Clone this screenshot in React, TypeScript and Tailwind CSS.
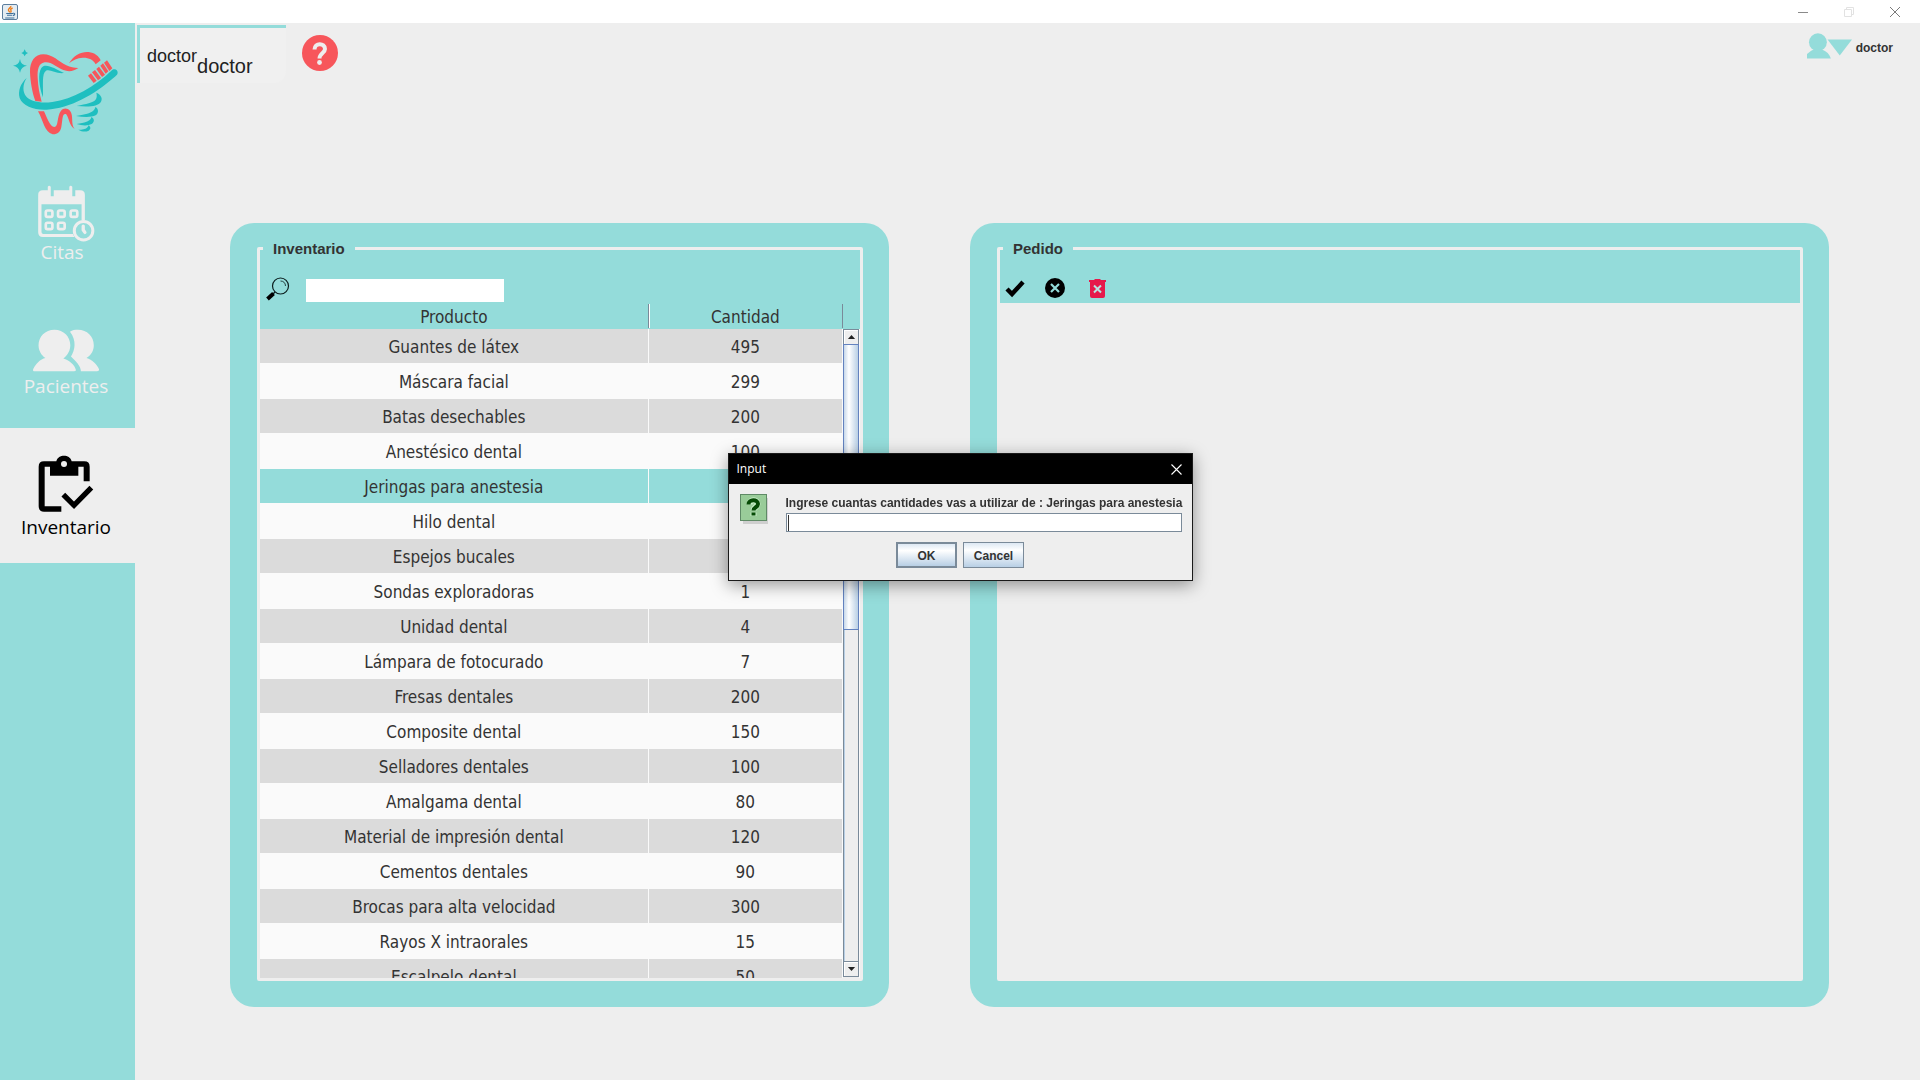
import React from "react";

const products: [string, string][] = [
  ["Guantes de látex", "495"],
  ["Máscara facial", "299"],
  ["Batas desechables", "200"],
  ["Anestésico dental", "100"],
  ["Jeringas para anestesia", "50"],
  ["Hilo dental", "100"],
  ["Espejos bucales", "50"],
  ["Sondas exploradoras", "1"],
  ["Unidad dental", "4"],
  ["Lámpara de fotocurado", "7"],
  ["Fresas dentales", "200"],
  ["Composite dental", "150"],
  ["Selladores dentales", "100"],
  ["Amalgama dental", "80"],
  ["Material de impresión dental", "120"],
  ["Cementos dentales", "90"],
  ["Brocas para alta velocidad", "300"],
  ["Rayos X intraorales", "15"],
  ["Escalpelo dental", "50"],
];

const SELECTED = 4;

function JavaIcon() {
  return (
    <svg viewBox="0 0 16 16" className="h-4 w-4">
      <rect x="0.5" y="0.5" width="15" height="15" rx="1.5" fill="#e4ecf2" stroke="#5b7d9c" />
      <path d="M8.8 2C9.4 3.6 6 4.6 6.4 6.2C6.6 7 7.8 7.6 7.8 8.6M10.6 4C8.8 4.8 8.2 5.6 9 6.6C9.4 7.4 8.9 8 8.5 8.6" fill="none" stroke="#ee7f1b" strokeWidth="1.4" />
      <path d="M4.2 9.5H11M5 11.3H10.3M3.2 14H12.4M11 9.3C13.4 8.8 13.2 11.2 11 11.6" fill="none" stroke="#3f709a" strokeWidth="1.1" />
    </svg>
  );
}

function Logo() {
  const teal = "#1fbfc0";
  const red = "#f7565b";
  return (
    <svg viewBox="30 140 330 270" className="h-[90px] w-[110px]" role="img" aria-label="Clínica dental">
      <path fill={teal} d="M60 176Q62 194 81 196Q63 199 60 217Q57 199 39 196Q57 194 60 176Z" />
      <path fill={teal} d="M74 147Q76 156 84 158Q76 160 74 168Q72 160 64 158Q72 156 74 147Z" />
      <path fill={red} d="M106 302C97 278 91 244 90 215C89 183 105 162 130 162C158 162 176 184 199 195C211 201 222 203 235 203C222 213 205 215 190 209C170 201 153 183 134 186C115 189 112 209 113 232C114 260 119 281 125 304Z" />
      <path fill={teal} d="M129 291C117 258 113 220 124 203C136 187 163 204 192 218C168 221 150 205 138 211C125 219 130 255 129 291Z" />
      <path fill={red} d="M207 189C222 163 245 153 266 155C284 157 297 168 302 180L287 192C280 177 264 171 248 172C232 173 218 180 207 189Z" />
      <g fill={red}>
        <path d="M264 226L273 219L290 241L281 248Z" />
        <path d="M276 216L285 209L303 233L294 240Z" />
        <path d="M289 206L297 199L315 223L306 230Z" />
        <path d="M301 196L309 189L325 213L317 220Z" />
        <path d="M312 187L321 180L337 204L328 212Z" />
      </g>
      <path fill={teal} d="M80 233C67 253 68 275 78 288C91 304 123 310 157 305C218 296 286 258 334 211C342 203 354 207 353 218C352 224 347 228 340 233C283 283 211 324 140 328C104 330 68 317 59 293C53 272 62 249 80 233Z" />
      <path fill={red} d="M114 333L132 333C140 350 149 379 163 380C176 380 170 348 183 331C190 322 202 322 210 331C222 346 211 370 224 386C207 377 207 350 198 341C186 338 188 358 184 380C181 395 171 403 158 402C133 396 130 361 114 333Z" />
      <path fill={teal} d="M289 277C304 283 308 295 303 304C294 319 266 320 230 317C259 311 279 307 286 299C291 293 291 285 289 277Z" />
      <path fill={teal} d="M286 320C297 326 296 339 287 345C274 352 250 351 228 347C251 343 269 340 278 333C283 329 285 325 286 320Z" />
      <path fill={teal} d="M274 350C284 355 284 365 275 371C263 377 246 376 230 371C248 369 261 366 268 360C272 357 273 354 274 350Z" />
      <path fill={teal} d="M265 375C273 379 273 387 266 391C256 396 245 394 235 388C247 388 256 386 261 382C264 380 265 378 265 375Z" />
    </svg>
  );
}

function CalendarIcon() {
  return (
    <svg viewBox="112 104 174 172" className="h-[57px] w-[58px]">
      <path fill="#eeeeee" fillRule="evenodd" d="M129 120H144V109Q148 103 153 109V138H162V120H209V109Q213 103 218 109V138H227V120H242Q256 120 256 134V210H246V162H125V246Q125 252 131 252H220L224 261H129Q115 261 115 246V134Q115 120 129 120Z" />
      <g fill="none" stroke="#eeeeee" strokeWidth="8">
        <rect x="138" y="181" width="20" height="19" rx="5" />
        <rect x="175" y="181" width="20" height="19" rx="5" />
        <rect x="213" y="181" width="20" height="19" rx="5" />
        <rect x="138" y="218" width="20" height="19" rx="5" />
        <rect x="175" y="218" width="20" height="19" rx="5" />
      </g>
      <circle cx="252" cy="242" r="28" fill="#94dcda" stroke="#eeeeee" strokeWidth="9" />
      <path d="M251 228V240L256 247" fill="none" stroke="#eeeeee" strokeWidth="10" strokeLinecap="round" />
    </svg>
  );
}

function PeopleIcon() {
  return (
    <svg viewBox="96 532 204 130" className="h-[43px] w-[68px]">
      <g fill="#eeeeee">
        <path d="M163 534C191 534 211 555 211 581C211 597 203 611 190 621C207 625 225 641 228 656Q228 660 222 660H104Q96 660 99 653C107 638 120 623 136 620C123 611 115 597 115 581C115 555 135 534 163 534Z" />
        <path d="M210 540C217 535 225 534 234 534C262 534 282 554 282 581C282 597 275 610 260 620C277 625 292 640 298 654Q299 660 292 660H243C243 643 227 629 213 615C225 596 231 567 210 540Z" />
      </g>
    </svg>
  );
}

function ClipboardIcon() {
  return (
    <svg viewBox="113 103 168 174" className="h-[58px] w-14">
      <path fill="#000" d="M131 122H168C173 100 209 100 214 122H252Q268 122 268 138V182H250V138H234V165H149V138H133V257H183V273H131Q115 273 115 257V138Q115 122 131 122Z" />
      <circle cx="191" cy="130" r="9" fill="#eeeeee" />
      <path d="M189 222L221 254L273 201" fill="none" stroke="#000" strokeWidth="16" />
    </svg>
  );
}

function HelpIcon() {
  return (
    <svg viewBox="0 0 36 36" className="h-9 w-9">
      <circle cx="18" cy="18" r="18" fill="#f7565b" />
      <path d="M12.5 14.5C12.5 7.5 23 7.5 23 14C23 18 17.5 18 17.5 23.5" fill="none" stroke="#eeeeee" strokeWidth="4" />
      <circle cx="17.5" cy="27.5" r="2.4" fill="#eeeeee" />
    </svg>
  );
}

function NavItem({ icon, label, className, labelClass }: { icon: React.ReactNode; label: string; className: string; labelClass: string }) {
  return (
    <button type="button" className={"flex h-[135px] w-full flex-col items-center justify-end " + className}>
      {icon}
      <span className={"font-['Open_Sans',sans-serif] text-[19px] " + labelClass}>{label}</span>
    </button>
  );
}

function Panel({ title, children }: { title: string; children: React.ReactNode }) {
  return (
    <section className="flex min-h-0 min-w-0 rounded-3xl bg-[#94dcda] pt-[15px] pr-[26px] pb-[26px] pl-[27px]">
      <fieldset className="flex min-h-0 min-w-0 flex-1 flex-col rounded-xs border-[3px] border-[#eeeeee]">
        <legend className="ml-[3px] px-[10px] text-[15px] leading-[21px] font-bold">{title}</legend>
        {children}
      </fieldset>
    </section>
  );
}

function ScrollBar() {
  return (
    <div className="flex w-[17px] flex-col border-r border-[#fafafa] bg-[#eeeeee]">
      <button type="button" aria-label="Subir" className="flex h-4 shrink-0 items-center justify-center border border-[#7a8a99] shadow-[inset_1px_1px_0_#fff]">
        <svg viewBox="0 0 9 5" className="h-1 w-[9px]">
          <path d="M4.5 0L9 5H0Z" fill="#222" />
        </svg>
      </button>
      <div className="flex-1 border-x border-[#7a8a99] bg-[#eeeeee] shadow-[inset_1px_0_0_#b8cfe5]">
        <div className="-mx-px -mt-px h-[46.5%] border border-[#6382bf] bg-linear-to-r from-[#c8d8ea] via-white via-35% to-[#b8cfe5]" />
      </div>
      <button type="button" aria-label="Bajar" className="mb-px flex h-4 shrink-0 items-center justify-center border border-[#7a8a99] shadow-[inset_1px_1px_0_#fff]">
        <svg viewBox="0 0 9 5" className="h-1 w-[9px]">
          <path d="M0 0H9L4.5 5Z" fill="#222" />
        </svg>
      </button>
    </div>
  );
}

function InventoryTable() {
  return (
    <div className="flex min-h-0 flex-1 font-['DejaVu_Sans_Condensed','DejaVu_Sans',sans-serif] text-[17px]">
      <div className="min-w-0 flex-1 overflow-hidden">
        <table className="w-full table-fixed border-separate border-spacing-0 text-center">
          <thead>
            <tr className="h-[26px] leading-[22px]">
              <th scope="col" className="w-2/3 p-0 font-normal">
                <span className="block border-r border-[#7a8a99] pt-0.5 shadow-[1px_0_0_#fff]">Producto</span>
              </th>
              <th scope="col" className="p-0 font-normal">
                <span className="block border-r border-[#7a8a99] pt-0.5">Cantidad</span>
              </th>
            </tr>
          </thead>
          <tbody>
            {products.map(([name, amount], i) => (
              <tr
                key={name}
                className={i === SELECTED ? "h-[35px] bg-[#94dcda]" : i % 2 === 0 ? "h-[35px] bg-[#dbdbdb]" : "h-[35px] bg-[#fafafa]"}
              >
                <td className="border-r border-b border-[#fafafa] p-0 pt-[3px]">{name}</td>
                <td className="border-r border-b border-[#fafafa] p-0 pt-[3px]">{amount}</td>
              </tr>
            ))}
          </tbody>
        </table>
      </div>
      <div className="flex pt-[26px]">
        <ScrollBar />
      </div>
    </div>
  );
}

function InputDialog() {
  return (
    <div className="fixed inset-0 flex items-center justify-center pb-[46px]">
      <div
        role="dialog"
        aria-labelledby="dialog-title"
        className="w-[465px] border border-[#1a1a1a] bg-[#eeeeee] shadow-[0_4px_16px_rgba(0,0,0,0.4)]"
      >
        <div className="flex h-[30px] items-center justify-between bg-black pr-[10px] pl-2 text-white">
          <h2 id="dialog-title" className="font-['Open_Sans',sans-serif] text-xs">Input</h2>
          <button type="button" aria-label="Cerrar">
            <svg viewBox="0 0 11 11" className="h-[11px] w-[11px]">
              <path d="M0.5 0.5L10.5 10.5M10.5 0.5L0.5 10.5" stroke="#fff" strokeWidth="1.1" />
            </svg>
          </button>
        </div>
        <div className="flex gap-[17px] px-[10px] pt-[10px]">
          <svg viewBox="0 0 30 32" className="h-8 w-[30px] shrink-0">
            <path d="M4 4H29V30H4Z" fill="#cfcfcf" />
            <rect x="1.5" y="0.5" width="26" height="26" fill="#99cc99" stroke="#5f8a66" />
            <path d="M10.5 10.5C10.5 5 18.5 5 18.5 10C18.5 13.5 14.5 13 14.5 16.5M14.5 18.5V22" fill="none" stroke="#c9f0c9" strokeWidth="6" />
            <path d="M9.5 10.5C9.5 5 19 5 19 10C19 13.5 14.5 13 14.5 16.5M14.5 18.5V21.5" fill="none" stroke="#064b06" strokeWidth="4" />
          </svg>
          <div className="relative min-w-0 flex-1">
            <label htmlFor="amount" className="mb-px block text-xs leading-[18px] font-bold whitespace-nowrap">
              Ingrese cuantas cantidades vas a utilizar de : Jeringas para anestesia
            </label>
            <input id="amount" type="text" autoFocus className="block h-[19px] w-full border border-[#7a8a99] bg-white px-0.5 text-xs caret-transparent outline-none" />
            <span aria-hidden="true" className="absolute bottom-px left-0.5 h-4 w-px bg-[#333333]" />
          </div>
        </div>
        <div className="flex justify-center gap-1.5 pt-[10px] pb-3 text-xs font-bold">
          <button type="button" className="h-[26px] w-[61px] border-2 border-[#7a8a99] bg-linear-to-b from-[#dde8f3] via-white via-30% to-[#b8cfe5] pt-0.5">
            OK
          </button>
          <button type="button" className="h-[26px] w-[61px] border border-[#7a8a99] bg-linear-to-b from-[#dde8f3] via-white via-30% to-[#b8cfe5] pt-0.5">
            Cancel
          </button>
        </div>
      </div>
    </div>
  );
}

export default function App() {
  return (
    <div className="flex h-screen flex-col overflow-hidden bg-[#eeeeee] font-['Liberation_Sans',Arial,sans-serif] text-[#333333]">
      <div className="flex h-[23px] shrink-0 items-center justify-between bg-white pr-5 pl-0.5">
        <JavaIcon />
        <div className="flex items-center gap-9">
          <button type="button" aria-label="Minimizar">
            <svg viewBox="0 0 10 10" className="h-[10px] w-[10px]"><path d="M0 5.5H10" stroke="#8a8a8a" /></svg>
          </button>
          <button type="button" aria-label="Maximizar">
            <svg viewBox="0 0 10 10" className="h-[10px] w-[10px]"><path d="M0.5 2.5H7.5V9.5H0.5ZM2.5 2.5V0.5H9.5V7.5H7.5" fill="none" stroke="#e2e2e2" /></svg>
          </button>
          <button type="button" aria-label="Cerrar ventana">
            <svg viewBox="0 0 10 10" className="h-[10px] w-[10px]"><path d="M0 0L10 10M10 0L0 10" stroke="#7a7a7a" /></svg>
          </button>
        </div>
      </div>

      <div className="flex min-h-0 flex-1">
        <nav className="w-[135px] shrink-0 bg-[#94dcda]">
          <div className="flex h-[135px] items-start justify-center pt-6 pr-[5px]">
            <Logo />
          </div>
          <NavItem icon={<CalendarIcon />} label="Citas" className="pr-[3px] pb-[31px] text-[#eeeeee]" labelClass="pr-2 leading-5" />
          <NavItem icon={<PeopleIcon />} label="Pacientes" className="pr-[3px] pb-7 text-[#eeeeee]" labelClass="leading-7" />
          <NavItem icon={<ClipboardIcon />} label="Inventario" className="bg-[#eeeeee] pr-[3px] pb-[22px] text-black" labelClass="leading-7" />
        </nav>

        <div className="flex min-w-0 flex-1 flex-col">
          <header className="flex h-[200px] shrink-0 items-start justify-between pt-0.5 pr-[27px] pl-0.5">
            <div className="flex items-start gap-4">
              <div className="flex h-[58px] w-[149px] items-start rounded-br-xl border-t-[3px] border-l-[3px] border-[#94dcda] bg-[#f0f0f0] pl-[7px] text-[#222]">
                <span className="pt-4 text-lg leading-6">doctor</span>
                <span className="pt-[26px] text-xl leading-6">doctor</span>
              </div>
              <button type="button" aria-label="Ayuda" className="mt-[10px]">
                <HelpIcon />
              </button>
            </div>
            <button type="button" className="mt-2 flex items-center gap-1 text-xs font-bold">
              <svg viewBox="141 101 136 77" className="h-[26px] w-[45px]">
                <g fill="#94dcda">
                  <circle cx="174" cy="128" r="27" />
                  <path d="M141 177V164C148 158 153 154 160 151H188C200 156 209 164 213 177Z" />
                  <path d="M203 120H277L240 168Z" />
                </g>
              </svg>
              <span className="pt-[3px]">doctor</span>
            </button>
          </header>

          <main className="grid min-h-0 flex-1 grid-cols-[659fr_859fr] gap-[81px] pr-[91px] pb-[73px] pl-[95px]">
            <Panel title="Inventario">
              <div className="flex h-11 shrink-0 items-end gap-4 pb-px pl-1.5">
                <label htmlFor="search" aria-label="Buscar">
                  <svg viewBox="0 0 24 24" className="mb-px h-6 w-6">
                    <circle cx="14.5" cy="9" r="8" fill="none" stroke="#0c1e1e" strokeWidth="1.2" />
                    <path d="M14.5 4C17.5 4 19.5 6 19.5 9" fill="none" stroke="#0c1e1e" strokeWidth="0.8" />
                    <path d="M9 15L6 18" stroke="#0c1e1e" strokeWidth="1.5" />
                    <path d="M7.5 16.5L1.5 22" stroke="#000" strokeWidth="4" />
                  </svg>
                </label>
                <input id="search" type="text" className="h-[23px] w-[198px] bg-white px-1 text-sm outline-none" />
              </div>
              <InventoryTable />
            </Panel>

            <Panel title="Pedido">
              <div className="flex h-11 shrink-0 items-end gap-5 pb-[5px] pl-[5px]">
                <button type="button" aria-label="Confirmar">
                  <svg viewBox="0 0 20 20" className="h-5 w-5"><path d="M2 11L7 16L18 4" fill="none" stroke="#000" strokeWidth="4.4" /></svg>
                </button>
                <button type="button" aria-label="Cancelar pedido">
                  <svg viewBox="0 0 20 20" className="h-5 w-5">
                    <circle cx="10" cy="10" r="10" fill="#000" />
                    <path d="M6 6L14 14M14 6L6 14" stroke="#94dcda" strokeWidth="2.2" />
                  </svg>
                </button>
                <button type="button" aria-label="Eliminar" className="ml-1">
                  <svg viewBox="0 0 17 20" className="h-5 w-[17px]">
                    <path d="M0 2H5L6 1H11L12 2H17V4H16V18Q16 20 14 20H3Q1 20 1 18V4H0Z" fill="#e6194b" />
                    <path d="M5 7.5L12 14.5M12 7.5L5 14.5" stroke="#b8e4e2" strokeWidth="2" />
                  </svg>
                </button>
              </div>
              <div className="flex-1 bg-[#eeeeee]" />
            </Panel>
          </main>
        </div>
      </div>

      <InputDialog />
    </div>
  );
}
